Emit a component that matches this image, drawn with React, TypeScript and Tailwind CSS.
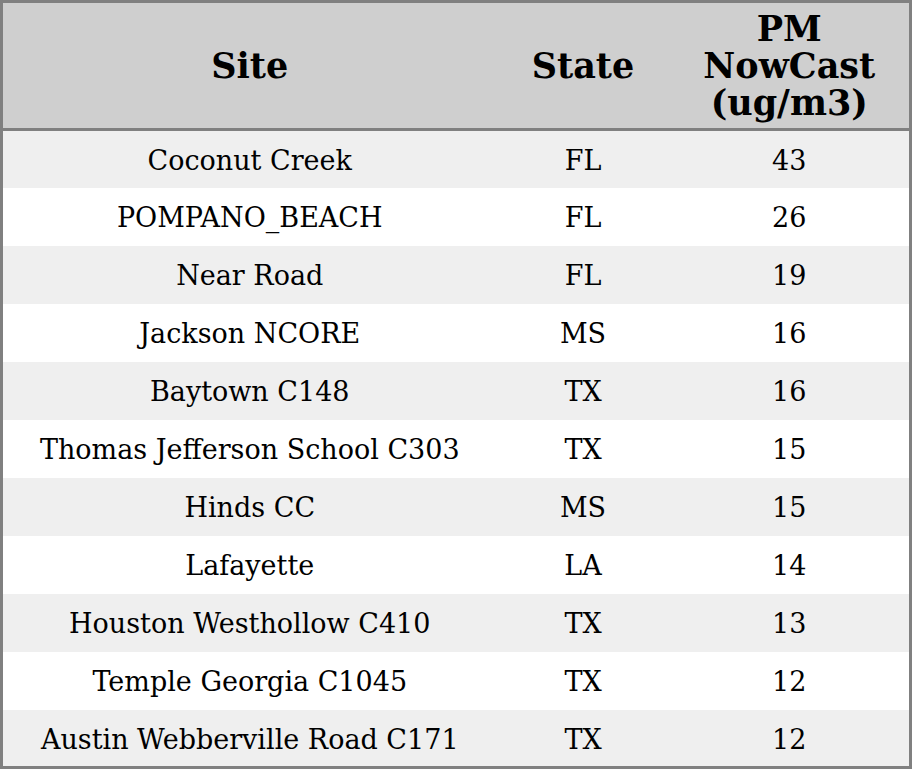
const rows: [string, string, number][] = [
  ["Coconut Creek", "FL", 43],
  ["POMPANO_BEACH", "FL", 26],
  ["Near Road", "FL", 19],
  ["Jackson NCORE", "MS", 16],
  ["Baytown C148", "TX", 16],
  ["Thomas Jefferson School C303", "TX", 15],
  ["Hinds CC", "MS", 15],
  ["Lafayette", "LA", 14],
  ["Houston Westhollow C410", "TX", 13],
  ["Temple Georgia C1045", "TX", 12],
  ["Austin Webberville Road C171", "TX", 12],
];

export default function App() {
  return (
    <div className="w-[912px] h-[769px] overflow-hidden bg-white font-['DejaVu_Serif',serif] text-black">
      <table className="w-[912px] table-fixed border-collapse border-[3px] border-[#808080]">
        <colgroup>
          <col className="w-[495px]" />
          <col className="w-[173px]" />
          <col />
        </colgroup>
        <thead>
          <tr className="h-[128px] bg-[#cfcfcf] border-b-[3px] border-[#808080]">
            <th className="text-[35px] font-bold leading-[37px] text-center">Site</th>
            <th className="text-[35px] font-bold leading-[37px] text-center">State</th>
            <th className="text-[35px] font-bold leading-[37px] text-center">
              PM
              <br />
              NowCast
              <br />
              (ug/m3)
            </th>
          </tr>
        </thead>
        <tbody>
          {rows.map(([site, state, pm], i) => (
            <tr
              key={site}
              className={i % 2 === 0 ? "h-[58px] bg-[#efefef]" : "h-[58px] bg-white"}
            >
              <td className="pt-[4px] text-[27px] text-center">{site}</td>
              <td className="pt-[4px] text-[27px] text-center">{state}</td>
              <td className="pt-[4px] text-[27px] text-center">{pm}</td>
            </tr>
          ))}
        </tbody>
      </table>
    </div>
  );
}
